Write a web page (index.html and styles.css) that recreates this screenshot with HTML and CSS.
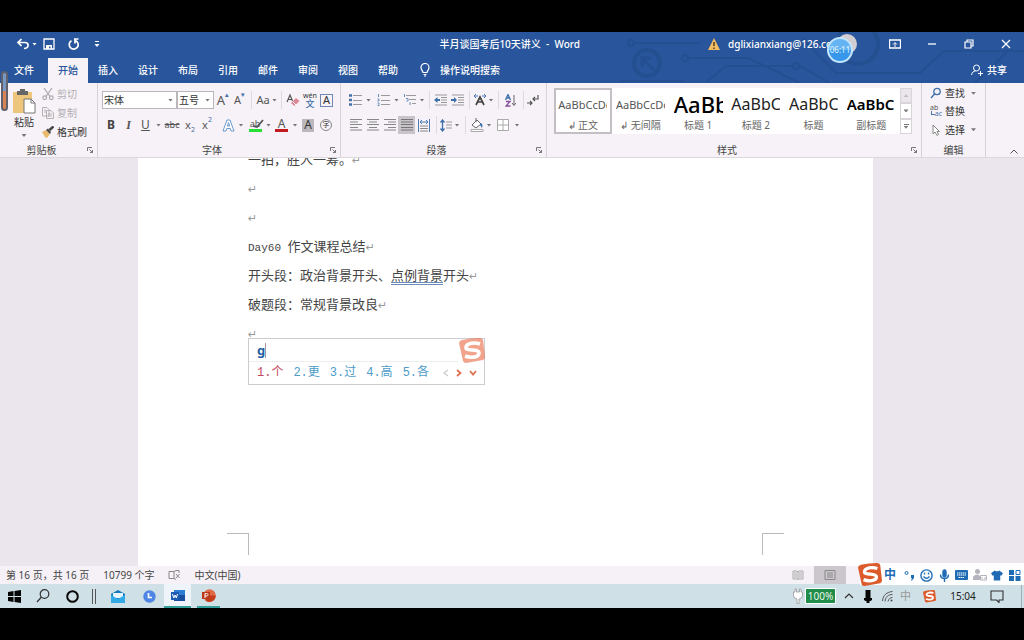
FILE: index.html
```html
<!DOCTYPE html>
<html lang="zh-CN">
<head>
<meta charset="utf-8">
<meta name="viewport" content="width=device-width, initial-scale=1">
<title>半月谈国考后10天讲义 - Word</title>
<link rel="stylesheet" href="styles.css">
</head>
<body>
<main class="app">
  <header class="header">
    <svg class="circuit" width="410" height="51" viewBox="614 32 410 51" fill="none" stroke="#244f91" stroke-width="2" aria-hidden="true">
      <circle cx="631" cy="43" r="3"/><path d="M634 43H700M620 81H685M688 58H748L800 83M706 82L726 66H792M800 66L830 83M802 38L836 73H920L944 51H1024M975 83L1008 51"/>
      <circle cx="685" cy="58" r="3"/><circle cx="796" cy="66" r="3"/>
      <circle cx="647" cy="63" r="13" stroke-width="4"/><path d="M654 70L643 59M642 67V58H651" stroke-width="3"/>
      <circle cx="858" cy="44" r="20" stroke-width="4"/>
    </svg>
    <div class="titlebar">
      <div class="quick">
        <button class="qbtn" aria-label="撤消"><svg width="14" height="14" viewBox="0 0 14 14" fill="none" stroke="#fff" stroke-width="1.7"><path d="M5.500 2L2 5.500L5.500 9M2 5.500H9C13.500 5.500 13 11.500 8 11.500"/></svg></button>
        <i class="arrow light"></i>
        <button class="qbtn" aria-label="保存"><svg width="12" height="12" viewBox="0 0 12 12"><path d="M1 1H11V11H1Z" fill="none" stroke="#fff" stroke-width="1.300"/><path d="M3 7H9V11H7.500V8.500H6V11H3Z" fill="#fff"/></svg></button>
        <button class="qbtn" aria-label="重复"><svg width="13" height="13" viewBox="0 0 13 13" fill="none" stroke="#fff" stroke-width="1.700"><path d="M4.500 2.700A4.500 4.500 0 1 0 8.500 2.500M7 1H11.500M8 1V5.500"/></svg></button>
        <button class="qbtn" aria-label="自定义快速访问工具栏"><svg width="6" height="7" viewBox="0 0 6 7"><path d="M1 .5H5" stroke="#fff"/><path d="M.5 3H5.500L3 6Z" fill="#fff"/></svg></button>
      </div>
      <h1 class="title">半月谈国考后10天讲义&nbsp; - &nbsp;Word</h1>
      <div class="account">
        <svg width="12" height="12" viewBox="0 0 12 12"><path d="M6 0L12 12H0Z" fill="#f5bd62"/><path d="M6 4V8M6 9.500V11" stroke="#463620" stroke-width="1.400"/></svg>
        <span class="mail">dglixianxiang@126.com</span>
        <span class="avatar">D</span>
        <span class="timer">06:11</span>
      </div>
      <div class="winbtns">
        <button aria-label="功能区显示选项"><svg width="12" height="10" viewBox="0 0 12 10" fill="none" stroke="#fff"><path d="M.5 1H11.500V9H.5Z" stroke-width="1.400"/><path d="M6 8V4M4 5.500L6 3.500L8 5.500"/></svg></button>
        <button aria-label="最小化"><svg width="10" height="10" viewBox="0 0 10 10"><path d="M1 5H9" stroke="#fff" stroke-width="1.300"/></svg></button>
        <button aria-label="还原"><svg width="10" height="10" viewBox="0 0 10 10" fill="none" stroke="#fff" stroke-width="1.200"><path d="M1 3H7V9H1ZM3 3V1H9V7H7"/></svg></button>
        <button aria-label="关闭"><svg width="10" height="10" viewBox="0 0 10 10"><path d="M1 1L9 9M9 1L1 9" stroke="#fff" stroke-width="1.200"/></svg></button>
      </div>
    </div>
    <nav class="tabs">
      <button class="tab file">文件</button><button class="tab active">开始</button><button class="tab">插入</button><button class="tab">设计</button><button class="tab">布局</button><button class="tab">引用</button><button class="tab">邮件</button><button class="tab">审阅</button><button class="tab">视图</button><button class="tab">帮助</button>
      <button class="tell"><svg width="10" height="14" viewBox="0 0 10 14" fill="none" stroke="#fff" stroke-width="1.200"><path d="M3 9.500C3 8 1 7 1 4.500A4 4 0 0 1 9 4.500C9 7 7 8 7 9.500ZM3.500 11.500H6.500M4 13H6"/></svg>操作说明搜索</button>
      <button class="share"><svg width="12" height="12" viewBox="0 0 12 12" fill="none" stroke="#fff"><circle cx="5.500" cy="4" r="3"/><path d="M.5 11C1 8.500 2.500 7 4.500 7M7 9.500H12M9.500 7V12"/></svg>共享</button>
    </nav>
  </header>

  <section class="ribbon" aria-label="功能区">
    <div class="group clipboard">
      <div class="body">
        <button class="paste">
          <svg width="24" height="25" viewBox="0 0 24 25"><path d="M1 3H20V24H1Z" fill="#edc57b"/><path d="M5 2H8V0H13V2H16V6H5Z" fill="#666"/><path d="M12 10H19L23 14V24H12Z" fill="#fff" stroke="#777"/><path d="M19 10V14H23" fill="none" stroke="#777"/></svg>
          <span>粘贴</span><i class="arrow"></i>
        </button>
        <div class="stack">
          <button disabled><svg width="12" height="12" viewBox="0 0 12 12" fill="none" stroke="#aaa" stroke-width="1.200"><path d="M2 0L8 8.500M10 0L4 8.500"/><circle cx="2.700" cy="9.700" r="1.800"/><circle cx="9.300" cy="9.700" r="1.800"/></svg>剪切</button>
          <button disabled><svg width="12" height="12" viewBox="0 0 12 12" fill="#f7f3f7" stroke="#b2b0b3"><path d="M.5.5H5L7 2.500V9H.5ZM4.500 3.500H9L11.500 6V11.500H4.500ZM6 7H10M6 9H10M2 3H4M2 5H4"/></svg>复制</button>
          <button><svg width="12" height="12" viewBox="0 0 12 12"><path d="M0 6L4 4L8 8L5 12L3 11Z" fill="#e9b96e"/><path d="M4 4L6 2.500L9 6L8 8Z" fill="#444"/><path d="M7.500 4L11.500.5" stroke="#444" stroke-width="2.500"/></svg>格式刷</button>
        </div>
      </div>
      <div class="caption"><span>剪贴板</span><button class="launch" aria-label="剪贴板选项"><svg width="6" height="6" viewBox="0 0 6 6" fill="none" stroke="#777"><path d="M.5 4V.5H5M2.500 2.500L5.500 5.500M5.500 3V5.500H3"/></svg></button></div>
    </div>

    <div class="group font">
      <div class="body rows">
        <div class="row font-a">
          <label class="combo"><select aria-label="字体"><option>宋体</option></select><i class="arrow"></i></label>
          <label class="combo"><select aria-label="字号"><option>五号</option></select><i class="arrow"></i></label>
          <button class="glyph grow" aria-label="增大字号">A<sup>▴</sup></button>
          <button class="glyph shrink" aria-label="减小字号">A<sup>▾</sup></button>
          <i class="sep"></i>
          <button class="glyph">Aa</button><i class="arrow"></i><i class="sep"></i>
          <button aria-label="清除所有格式"><svg width="14" height="14" viewBox="0 0 14 14"><path d="M1 9L4 2L6.500 8M2 6.500H5.500" fill="none" stroke="#555" stroke-width="1.200"/><path d="M5 10L10 5L13.500 8L8.500 13Z" fill="#df8797"/><path d="M6.500 8.500L10 12" stroke="#fff"/></svg></button>
          <button class="pinyin"><small>wén</small><b>文</b></button>
          <button class="glyph boxed">A</button>
        </div>
        <div class="row font-b">
          <button class="glyph"><b>B</b></button><button class="glyph ital">I</button><button class="glyph under">U</button><i class="arrow"></i>
          <button class="glyph strike">abc</button><button class="glyph script">x<sub>2</sub></button><button class="glyph script">x<sup>2</sup></button><span></span>
          <button aria-label="文本效果"><svg width="13" height="13" viewBox="0 0 13 13" fill="#fff" stroke="#6a99cd"><path d="M1 12L5 1H8L12 12H9L8.300 9.500H4.700L4 12ZM5.300 7H7.700L6.500 3.500Z"/></svg></button><i class="arrow"></i>
          <button class="ink green" aria-label="文本突出显示颜色"><span>ab</span><svg width="14" height="10" viewBox="0 0 14 10"><path d="M3 7L7 8L13 1" fill="none" stroke="#555" stroke-width="1.800"/></svg></button><i class="arrow"></i>
          <button class="ink red" aria-label="字体颜色">A</button><i class="arrow"></i>
          <button class="glyph shaded">A</button><button class="circled">字</button>
        </div>
      </div>
      <div class="caption"><span>字体</span><button class="launch" aria-label="字体选项"><svg width="6" height="6" viewBox="0 0 6 6" fill="none" stroke="#777"><path d="M.5 4V.5H5M2.500 2.500L5.500 5.500M5.500 3V5.500H3"/></svg></button></div>
    </div>

    <div class="group para">
      <div class="body rows">
        <div class="row para-a">
          <button aria-label="项目符号"><svg width="13" height="12" viewBox="0 0 13 12"><path d="M4 1.500H13M4 6.500H13M4 10.500H13" stroke="#999"/><path d="M0 1.500H3M0 6H3M0 10.500H3" stroke="#4472a8" stroke-width="2.400"/></svg></button><i class="arrow"></i>
          <button aria-label="编号"><svg width="13" height="12" viewBox="0 0 13 12"><path d="M4 1.500H13M4 6.500H13M4 10.500H13" stroke="#999"/><path d="M1.500 0V3M.5 5H2V7H.5M.5 9H2V11.500H.5" fill="none" stroke="#6a91be"/></svg></button><i class="arrow"></i>
          <button aria-label="多级列表"><svg width="13" height="12" viewBox="0 0 13 12"><path d="M3 1.500H13M6 5.500H13M9 9.500H13" stroke="#999"/><path d="M1.500 0V3M3 4.500H5V7H3.500M7 8V11" fill="none" stroke="#6a91be"/></svg></button><i class="arrow"></i><i class="sep"></i>
          <button aria-label="减少缩进量"><svg width="13" height="12" viewBox="0 0 13 12"><path d="M1 1H13M7 3.500H13M7 6H13M7 8.500H13M1 11H13" stroke="#999"/><path d="M0 6L3.500 3V5H6V7H3.500V9Z" fill="#3f6fa8"/></svg></button>
          <button aria-label="增加缩进量"><svg width="13" height="12" viewBox="0 0 13 12"><path d="M1 1H13M7 3.500H13M7 6H13M7 8.500H13M1 11H13" stroke="#999"/><path d="M6 6L3 3V5H0V7H3V9Z" fill="#3f6fa8"/></svg></button><i class="sep"></i>
          <button aria-label="中文版式"><svg width="14" height="12" viewBox="0 0 14 12" fill="none"><path d="M3 11L7 3L11 11M4.500 8H9.500" stroke="#444" stroke-width="1.700"/><path d="M1 2H5M1 2L3 0M1 2L3 4M13 2H9M13 2L11 0M13 2L11 4" stroke="#4b7db4"/></svg></button><i class="arrow"></i><i class="sep"></i>
          <button aria-label="排序"><svg width="11" height="13" viewBox="0 0 11 13" fill="none"><path d="M.5 6L3 .5L5.500 6M1.500 4H4.500" stroke="#3f6fa8" stroke-width="1.300"/><path d="M1 7.500H5L1 12H5.500" stroke="#86519b" stroke-width="1.300"/><path d="M9 1V11M7 9L9 11.500L11 9" stroke="#666"/></svg></button><i class="sep"></i>
          <button aria-label="显示编辑标记"><svg width="12" height="12" viewBox="0 0 12 12" fill="none" stroke="#555" stroke-width="1.200"><path d="M11 1V5H6M8 3L6 5L8 7M0 9H5M3 7L5 9L3 11"/></svg></button>
        </div>
        <div class="row para-b">
          <button aria-label="左对齐"><svg width="12" height="12" viewBox="0 0 12 12" stroke="#888"><path d="M0 .5H12M0 3H8M0 5.500H12M0 8.500H8M0 11H12"/></svg></button>
          <button aria-label="居中"><svg width="12" height="12" viewBox="0 0 12 12" stroke="#888"><path d="M0 .5H12M2 3H10M0 5.500H12M2 8.500H10M0 11H12"/></svg></button>
          <button aria-label="右对齐"><svg width="12" height="12" viewBox="0 0 12 12" stroke="#888"><path d="M0 .5H12M4 3H12M0 5.500H12M4 8.500H12M0 11H12"/></svg></button>
          <button class="pressed" aria-label="两端对齐"><svg width="12" height="12" viewBox="0 0 12 12" stroke="#777"><path d="M0 .5H12M0 3H12M0 5.500H12M0 8.500H12M0 11H12"/></svg></button>
          <button aria-label="分散对齐"><svg width="12" height="13" viewBox="0 0 12 13" fill="none"><path d="M.5 0V13M11.500 0V13M2 3H10M4 1L2 3L4 5M8 1L10 3L8 5" stroke="#4b7db4"/><path d="M2 7H10M2 9.500H10M2 12H10" stroke="#888"/></svg></button><i class="sep"></i>
          <button aria-label="行距"><svg width="12" height="13" viewBox="0 0 12 13" fill="none"><path d="M2.500 1V12M.5 3.500L2.500 1L4.500 3.500M.5 9.500L2.500 12L4.500 9.500" stroke="#3f6fa8" stroke-width="1.300"/><path d="M6 3H12M6 6H12M6 9H12" stroke="#999"/></svg></button><i class="arrow"></i><i class="sep"></i>
          <button aria-label="底纹"><svg width="14" height="14" viewBox="0 0 14 14"><path d="M2 7L7 2L11 6L6 10Z" fill="#fff" stroke="#666"/><path d="M6 4V0" stroke="#666"/><path d="M10 5C13 5 12.500 8 12 10L10 7Z" fill="#3f6fa8"/><path d="M1 11.500H13V13.500H1Z" fill="#fff" stroke="#aaa"/></svg></button><i class="arrow"></i>
          <button aria-label="边框"><svg width="12" height="12" viewBox="0 0 12 12" fill="#fff" stroke="#aaa"><path d="M.5.5H11.500V11.500H.5ZM6 .5V11.500M.5 6H11.500"/></svg></button><i class="arrow"></i>
        </div>
      </div>
      <div class="caption"><span>段落</span><button class="launch" aria-label="段落选项"><svg width="6" height="6" viewBox="0 0 6 6" fill="none" stroke="#777"><path d="M.5 4V.5H5M2.500 2.500L5.500 5.500M5.500 3V5.500H3"/></svg></button></div>
    </div>

    <div class="group styles">
      <div class="body">
        <div class="gallery">
          <button class="style on"><span class="prev small">AaBbCcDd</span><span>↲ 正文</span></button>
          <button class="style"><span class="prev small">AaBbCcDd</span><span>↲ 无间隔</span></button>
          <button class="style"><span class="prev huge">AaBb</span><span>标题 1</span></button>
          <button class="style"><span class="prev">AaBbC</span><span>标题 2</span></button>
          <button class="style"><span class="prev">AaBbC</span><span>标题</span></button>
          <button class="style"><span class="prev strong">AaBbC</span><span>副标题</span></button>
        </div>
        <div class="spin">
          <button class="off" aria-label="上一行"><i class="arrow up"></i></button><button aria-label="下一行"><i class="arrow"></i></button><button class="more" aria-label="其他"><i class="arrow"></i></button>
        </div>
      </div>
      <div class="caption"><span>样式</span><button class="launch" aria-label="样式选项"><svg width="6" height="6" viewBox="0 0 6 6" fill="none" stroke="#777"><path d="M.5 4V.5H5M2.500 2.500L5.500 5.500M5.500 3V5.500H3"/></svg></button></div>
    </div>

    <div class="group editing">
      <div class="body">
        <div class="stack">
          <button><svg width="12" height="12" viewBox="0 0 12 12" fill="none" stroke="#3f6fa8" stroke-width="1.300"><circle cx="7" cy="4.500" r="3.200"/><path d="M4.500 7L1 11"/></svg>查找<i class="arrow"></i></button>
          <button><span class="swap"><span>ab</span><span>ac</span></span>替换</button>
          <button><svg width="12" height="12" viewBox="0 0 12 12" fill="#fff" stroke="#888"><path d="M3 1V10L5 8L7 11.500L8.500 10.500L7 7.500H9.500Z"/></svg>选择<i class="arrow"></i></button>
        </div>
      </div>
      <div class="caption"><span>编辑</span></div>
    </div>
    <button class="collapse" aria-label="折叠功能区"><svg width="8" height="5" viewBox="0 0 8 5" fill="none" stroke="#555"><path d="M.5 4.500L4 1L7.500 4.500"/></svg></button>
    <span class="gauge"></span>
  </section>

  <section class="desk">
    <article class="page">
      <div class="text">
        <p>一拍，胜人一筹。<span class="ret">↵</span></p>
        <p><span class="ret">↵</span></p>
        <p><span class="ret">↵</span></p>
        <p><span class="latin">Day60 </span>作文课程总结<span class="ret">↵</span></p>
        <p>开头段：政治背景开头、<u>点例背景</u>开头<span class="ret">↵</span></p>
        <p>破题段：常规背景改良<span class="ret">↵</span></p>
        <p><span class="ret">↵</span></p>
        <div class="ime">
          <div class="typed"><input aria-label="拼音输入" value="g"><span class="caret"></span></div>
          <div class="cands">
            <button class="first">1.个</button><button>2.更</button><button>3.过</button><button>4.高</button><button>5.各</button>
            <span class="pager">
              <button aria-label="上一页"><svg width="6" height="8" viewBox="0 0 6 8" fill="none" stroke="#ccc" stroke-width="1.200"><path d="M5 1L1 4L5 7"/></svg></button>
              <button aria-label="下一页"><svg width="6" height="8" viewBox="0 0 6 8" fill="none" stroke="#e0714f" stroke-width="1.800"><path d="M1 1L4.500 4L1 7"/></svg></button>
              <button aria-label="更多"><svg width="8" height="6" viewBox="0 0 8 6" fill="none" stroke="#e0714f" stroke-width="1.800"><path d="M1 1L4 4.500L7 1"/></svg></button>
            </span>
          </div>
          <svg class="sogou" width="26" height="26" viewBox="0 0 26 26" opacity=".6"><path d="M3 2Q12 0 21 0Q23 0 24 2L26 19Q26 21 24 22L7 25Q5 25 4 23L0 5Q0 3 3 2Z" fill="#e8693f"/><path d="M21 6C15 4 8 5 7 9C6 14 20 10 20 15C20 20 11 20 6 18" fill="none" stroke="#fff" stroke-width="3.600"/></svg>
        </div>
      </div>
      <div class="crops"><i class="crop left"></i><i class="crop right"></i></div>
    </article>
  </section>

  <footer class="status">
    <span>第 16 页，共 16 页</span><span>10799 个字</span>
    <svg width="12" height="10" viewBox="0 0 12 10" fill="none" stroke="#888"><path d="M6 1.500H1V8.500H6V1M6 1.500L8 .5H11V3M6 8.500L8 9.500M8 4L11.500 8M11.500 4L8 8"/></svg>
    <span>中文(中国)</span>
    <div class="views">
      <button aria-label="阅读视图"><svg width="12" height="10" viewBox="0 0 12 10" fill="none" stroke="#aaa"><path d="M6 1V9.500M1 1H5L6 2L7 1H11V9H1ZM2 3H5M2 5H5M2 7H5M7 3H10M7 5H10M7 7H10"/></svg></button>
      <button class="on" aria-label="页面视图"><svg width="12" height="10" viewBox="0 0 12 10" fill="none" stroke="#888"><path d="M1 .5H11V9.500H1ZM3 3H9M3 5H9M3 7H9"/></svg></button>
    </div>
    <div class="imebar">
      <button aria-label="搜狗输入法"><svg width="24" height="24" viewBox="0 0 26 26"><path d="M3 2Q12 0 21 0Q23 0 24 2L26 19Q26 21 24 22L7 25Q5 25 4 23L0 5Q0 3 3 2Z" fill="#dc5a2b"/><path d="M21 6C15 4 8 5 7 9C6 14 20 10 20 15C20 20 11 20 6 18" fill="none" stroke="#fff" stroke-width="3.600"/></svg></button>
      <button class="zh">中</button>
      <button aria-label="标点"><svg width="11" height="12" viewBox="0 0 11 12"><circle cx="2.500" cy="4" r="1.500" fill="none" stroke="#1f6cb5"/><path d="M7 6H10V9L8 11.500H7L8 9H7Z" fill="#1f6cb5"/></svg></button>
      <button aria-label="表情"><svg width="13" height="13" viewBox="0 0 13 13" fill="none" stroke="#1f6cb5" stroke-width="1.400"><circle cx="6.500" cy="6.500" r="5.600"/><path d="M3.500 7.500Q6.500 11 9.500 7.500M4.500 3.500V5.500M8.500 3.500V5.500"/></svg></button>
      <button aria-label="语音"><svg width="11" height="13" viewBox="0 0 11 13" fill="none" stroke="#1f6cb5" stroke-width="1.400"><rect x="4" y="1" width="3" height="7" rx="1.500" fill="#1f6cb5"/><path d="M1.500 5.500C1.500 11 9.500 11 9.500 5.500M5.500 10V13"/></svg></button>
      <button aria-label="软键盘"><svg width="13" height="10" viewBox="0 0 13 10"><rect width="13" height="10" rx="1" fill="#1f6cb5"/><path d="M2 3H11M2 5H11M3.500 7.500H9.500" stroke="#fff" stroke-dasharray="1.500 .5"/></svg></button>
      <button aria-label="登录"><svg width="14" height="12" viewBox="0 0 14 12" fill="#b4b5bd"><circle cx="4.500" cy="2.500" r="2.500"/><path d="M0 11V8Q1 5.500 5 5.500L7 7V11Z"/><path d="M7.500 6.500H13.500V11H7.500ZM9 8V10M12 8V10" fill="#fff" stroke="#b4b5bd"/></svg></button>
      <button aria-label="皮肤"><svg width="12" height="11" viewBox="0 0 13 11"><path d="M4 0Q6.500 2 9 0L13 3L11 6L10 5V11H3V5L2 6L0 3Z" fill="#1f6cb5"/></svg></button>
      <button aria-label="工具箱"><svg width="12" height="11" viewBox="0 0 12 11" fill="#1f6cb5"><path d="M0 0H5V5H0ZM0 6H5V11H0ZM6.500 6H11.500V11H6.500Z"/><path d="M7 .5H11V4.500H7Z" fill="none" stroke="#1f6cb5"/></svg></button>
    </div>
  </footer>

  <nav class="taskbar">
    <div class="pins">
      <button aria-label="开始菜单"><svg width="13" height="13" viewBox="0 0 13 13"><path d="M0 2L5.500 1V6H0ZM6.500 1L13 0V6H6.500ZM0 7H5.500V12L0 11ZM6.500 7H13V13L6.500 12Z" fill="#050505"/></svg></button>
      <button aria-label="搜索"><svg width="14" height="14" viewBox="0 0 14 14" fill="none" stroke="#333" stroke-width="1.200"><circle cx="8.500" cy="5" r="4.300"/><path d="M5.500 8L1 13"/></svg></button>
      <button aria-label="Cortana"><svg width="13" height="13" viewBox="0 0 13 13"><circle cx="6.500" cy="6.500" r="5.300" fill="none" stroke="#080808" stroke-width="2"/></svg></button>
      <span class="bars"></span>
      <button aria-label="邮件"><svg width="14" height="13" viewBox="0 0 14 13"><path d="M0 4L7 0L14 4V13H0Z" fill="#1578bd"/><path d="M2 3H12V8H2Z" fill="#e8f6fc"/><path d="M0 5L7 9L14 5V13H0Z" fill="#33a9e6"/></svg></button>
      <button aria-label="时钟"><svg width="13" height="13" viewBox="0 0 13 13"><circle cx="6.500" cy="6.500" r="6.200" fill="#4f86e5"/><path d="M5.500 3V7.500H9" fill="none" stroke="#fff" stroke-width="1.700"/></svg></button>
      <button class="current" aria-label="Word"><svg width="14" height="13" viewBox="0 0 14 13"><path d="M3 1H14V12H3Z" fill="#2f7cd4"/><path d="M3 6H14V12H3Z" fill="#184c9c"/><path d="M0 3H8V11H0Z" fill="#1c5cb5"/><path d="M1.500 5L2.700 9L4 6L5.300 9L6.500 5" fill="none" stroke="#fff"/></svg></button>
      <button class="open" aria-label="PowerPoint"><svg width="14" height="13" viewBox="0 0 14 13"><circle cx="7.500" cy="6.500" r="6.200" fill="#e0694a"/><path d="M7.500 6.500H13.700A6.200 6.200 0 0 1 3 11Z" fill="#c43e1c"/><path d="M0 3H8V10H0Z" fill="#bd3b1b"/><path d="M3 9V4.500H4.500C6.500 4.500 6.500 7 4.500 7H3" fill="none" stroke="#fff"/></svg></button>
    </div>
    <div class="tray">
      <svg width="10" height="16" viewBox="0 0 10 16" fill="#fff" stroke="#999" stroke-width=".8"><path d="M2 4V1H3.500V4H6.500V1H8V4H9.500V8Q9 10.500 6 11V15.500H4V11Q1 10.500.5 8V4Z"/></svg>
      <span class="battery">100%</span>
      <button aria-label="显示隐藏的图标"><svg width="10" height="6" viewBox="0 0 10 6" fill="none" stroke="#333" stroke-width="1.200"><path d="M1 5L5 1L9 5"/></svg></button>
      <button aria-label="麦克风"><svg width="8" height="13" viewBox="0 0 8 13"><path d="M1.500 0H6.500V8H8V10L6.500 11H5.500V13H2.500V11H1.500L0 10V8H1.500Z" fill="#080808"/></svg></button>
      <button aria-label="网络"><svg width="11" height="11" viewBox="0 0 11 11" fill="none" stroke="#555"><path d="M.5 10C1 4 5 1 10.500.5M3 10.500C3.500 6 6 3.500 10.500 3.500M6 10.500C6.500 8 8 6.500 10.500 6.500"/><circle cx="9.500" cy="9.500" r="1" fill="#444" stroke="none"/></svg></button>
      <button class="off">中</button>
      <button aria-label="搜狗"><svg width="13" height="13" viewBox="0 0 26 26"><path d="M3 2Q12 0 21 0Q23 0 24 2L26 19Q26 21 24 22L7 25Q5 25 4 23L0 5Q0 3 3 2Z" fill="#dc5a2b"/><path d="M21 6C15 4 8 5 7 9C6 14 20 10 20 15C20 20 11 20 6 18" fill="none" stroke="#fff" stroke-width="3.600"/></svg></button>
      <time>15:04</time>
      <button aria-label="通知"><svg width="14" height="13" viewBox="0 0 14 13" fill="none" stroke="#333" stroke-width="1.100"><path d="M1 1H13V10H9V12.500L6.500 10H1Z"/></svg></button>
      <span class="peek"></span>
    </div>
  </nav>
</main>
</body>
</html>
```
FILE: styles.css
```css
* { box-sizing: border-box; }
body {
  margin: 0;
  background: #000;
  color: #333;
  font: 10px/14px "Noto Sans", "Noto Sans CJK SC", sans-serif;
}
button {
  display: flex;
  align-items: center;
  justify-content: center;
  padding: 0;
  border: 0;
  background: none;
  color: inherit;
  font: inherit;
  white-space: nowrap;
}
svg { flex: none; display: block; }
.app {
  display: flex;
  flex-direction: column;
  min-height: 100vh;
  padding: 32px 0;
}
.arrow {
  flex: none;
  justify-self: center;
  width: 5px;
  height: 3px;
  background: #777;
  clip-path: polygon(0 0, 100% 0, 50% 100%);
}
.arrow.light { background: #fff; }
.arrow.up { background: #bbb; clip-path: polygon(50% 0, 100% 100%, 0 100%); }

/* Title bar and tabs */
.header { position: relative; background: #28559b; color: #fff; }
.circuit { position: absolute; right: 0; top: 0; }
.titlebar {
  position: relative;
  display: grid;
  grid-template-columns: 1fr auto 296px 148px;
  align-items: center;
  height: 26px;
  padding-bottom: 2px;
}
.quick { display: flex; align-items: center; padding-left: 14px; }
.qbtn { width: 24px; height: 24px; }
.qbtn:first-child { width: 18px; }
.title { margin: 0; font-size: 10px; font-weight: 500; line-height: 24px; }
.account { position: relative; display: flex; align-items: center; gap: 8px; padding-left: 128px; }
.mail { width: 112px; margin-right: -11px; font-size: 10px; font-weight: 500; white-space: nowrap; }
.avatar {
  position: relative;
  display: grid;
  place-items: center;
  flex: none;
  width: 20px;
  height: 20px;
  border-radius: 50%;
  background: #d2cdd1;
  color: #777;
}
.timer {
  position: absolute;
  right: 23px;
  top: 3px;
  display: grid;
  place-items: center;
  width: 26px;
  height: 26px;
  border: 2px solid #c3e5fb;
  border-radius: 50%;
  background: linear-gradient(#64b4f3 50%, #3797ea 50%);
  color: #e5f4ff;
  font-size: 8px;
}
.winbtns { display: grid; grid-template-columns: repeat(4, 37px); }
.winbtns button { height: 24px; }
.tabs { display: flex; height: 25px; }
.tabs button { position: relative; padding-bottom: 1px; font-weight: 500; }
.tab { width: 40px; }
.tab.file { width: 48px; }
.tab.active { background: #f6f2f7; color: #28559b; }
.tell { gap: 10px; margin-left: 12px; }
.share { gap: 4px; margin-left: auto; margin-right: 17px; }

/* Ribbon */
.ribbon {
  position: relative;
  display: flex;
  border-bottom: 1px solid #ddd7de;
  background: #f6f2f7;
}
.group {
  display: flex;
  flex-direction: column;
  border-right: 1px solid #d6d2d8;
}
.body { display: flex; height: 60px; padding-top: 5px; }
.rows { flex-direction: column; gap: 1px; }
.caption { display: flex; align-items: center; height: 14px; color: #444; }
.caption span { flex: 1; text-align: center; }
.launch { width: 14px; }
.clipboard { width: 98px; }
.font { width: 243px; }
.para { width: 206px; }
.styles { flex: 1; }
.editing { width: 64px; }
.paste { flex-direction: column; justify-content: flex-start; width: 42px; padding-left: 6px; }
.paste .arrow { margin-top: 4px; }
.paste span { line-height: 16px; }
.stack { display: flex; flex-direction: column; height: 57px; }
.stack button { flex: 1; justify-content: flex-start; gap: 3px; }
.stack button:disabled { color: #b2aeb4; }
.clipboard .body, .editing .body { padding-top: 1px; }
.clipboard .paste { padding-top: 5px; }
.stack .arrow { margin-left: 3px; }
.editing .stack { padding-left: 8px; }
.editing .stack { height: 55px; }
.swap { width: 12px; color: #555; font-size: 7px; line-height: 6px; text-align: left; }
.swap span { display: block; }
.swap span:last-child { display: flex; justify-content: flex-end; color: #4976ac; }
.swap span:last-child::before { content: ""; width: 3px; height: 3px; border: solid #4976ac; border-width: 0 0 1px 1px; }

.row { display: grid; align-items: center; height: 24px; }
.row > button { height: 18px; }
.font .row { padding-left: 4px; }
.para .row { padding-left: 6px; }
.font-a { grid-template-columns: 75px 37px 18px 15px 8px 16px 7px 6px 18px 16px 17px; }
.font-b { grid-template-columns: 18px 17px 17px 9px 18px 18px 16px 4px 18px 8px 20px 7px 19px 8px 18px 18px; }
.para-a { grid-template-columns: 17px 9px 20px 7px 18px 8px 6px 17px 17px 6px 15px 8px 6px 18px 8px 12px; }
.para-b { grid-template-columns: 17px 17px 17px 17px 18px 6px 14px 8px 8px 16px 8px 20px 8px; }
.sep { justify-self: center; width: 1px; height: 18px; background: #dedae0; }
.combo {
  display: flex;
  align-items: center;
  height: 18px;
  padding-right: 3px;
  border: 1px solid #bab6bc;
  background: #fff;
}
.combo select {
  flex: 1;
  min-width: 0;
  padding: 0 0 0 1px;
  border: 0;
  appearance: none;
  background: none;
  color: #333;
  font: inherit;
}
.glyph { color: #555; font-size: 12px; }
.glyph b { color: #444; }
.glyph sup, .glyph sub { color: #3f6fa8; font-size: 7px; line-height: 8px; }
.glyph sup { align-self: flex-start; }
.glyph sub { align-self: flex-end; }
.font-a > .glyph { font-size: 11px; }
.font-a > .grow { font-size: 13px; }
.pinyin { flex-direction: column; }
.pinyin small { font-size: 7px; line-height: 7px; }
.pinyin b { color: #3f6fa8; font-size: 9px; font-weight: 500; line-height: 9px; }
.row > .boxed { justify-self: center; width: 13px; height: 13px; border: 1px solid #7089b6; color: #333; }
.ital { font-family: "Liberation Serif", serif; font-style: italic; font-weight: 700; }
.under { text-decoration: underline; }
.strike { font-size: 9px; text-decoration: line-through; }
.script { font-size: 11px; }
.row > .ink { position: relative; justify-self: center; width: 13px; height: 14px; border-bottom: 3px solid #c11a20; color: #555; font-size: 12px; line-height: 11px; }
.row > .green { border-color: #28df36; font-size: 9px; }
.green svg { position: absolute; left: 1px; top: 1px; }
.row > .shaded { justify-self: center; width: 12px; height: 13px; background: #bbb7bc; color: #333; }
.row > .circled { justify-self: center; width: 12px; height: 12px; border: 1px solid #888; border-radius: 50%; font-size: 7px; }
.row > .pressed { background: #c8c4c9; }

.styles .body { padding: 5px 9px 9px 7px; }
.gallery { display: grid; grid-template-columns: repeat(6, 1fr); flex: 1; min-width: 0; background: #fff; }
.style {
  flex-direction: column;
  min-width: 0;
  overflow: hidden;
  border: 2px solid transparent;
  color: #666;
}
.style.on { border-color: #c3bfc4; }
.prev {
  width: 49px;
  height: 27px;
  overflow: hidden;
  color: #222;
  font-size: 16px;
  line-height: 27px;
  text-align: left;
}
.small { color: #555; font-size: 11px; }
.huge { color: #000; font-size: 22px; font-weight: 500; }
.strong { color: #000; font-size: 15px; font-weight: 600; }
.spin { display: flex; flex-direction: column; width: 12px; }
.spin button { flex: 1; border: 1px solid #d8d4d9; background: #fff; }
.spin .off { background: #ebe6ec; }
.spin .more { flex-direction: column; gap: 1px; }
.more::before { content: ""; width: 5px; height: 1px; background: #777; }
.collapse { align-self: flex-end; width: 38px; height: 12px; padding-left: 18px; }
.gauge {
  position: absolute;
  left: 1px;
  top: -12px;
  width: 7px;
  height: 40px;
  border: 2px solid #60616c;
  border-radius: 4px;
  background: linear-gradient(#7899c4 50%, #d98553 50%);
}

/* Document */
.desk {
  display: flex;
  flex: 1;
  justify-content: center;
  overflow: hidden;
  padding-right: 13px;
  background: #ebe5ed;
}
.page {
  display: flex;
  flex-direction: column;
  width: 735px;
  background: #fff;
}
.text {
  position: relative;
  margin-top: -14px;
  padding: 0 110px;
  color: #444;
  font: 13px/29px "Noto Sans CJK SC", sans-serif;
}
.text p { height: 29px; margin: 0; }
.latin { font-family: "Liberation Mono", monospace; font-size: 11px; white-space: pre; }
.ret { color: #999; font-family: "DejaVu Sans", sans-serif; font-size: 11px; }
.text u { text-decoration: underline double #6c8cba 1px; text-underline-offset: 2px; }
.crops { display: flex; justify-content: space-between; margin-top: auto; padding: 0 89px 11px; }
.crop { width: 22px; height: 22px; border-top: 1px solid #bbb; }
.left { border-right: 1px solid #bbb; }
.right { border-left: 1px solid #bbb; }

/* Candidate window */
.ime {
  position: absolute;
  left: 110px;
  top: 194px;
  width: 237px;
  border: 1px solid #cfc9d0;
  background: #fff;
  line-height: 20px;
}
.typed { display: flex; align-items: center; height: 23px; margin-right: 26px; padding-left: 8px; border-bottom: 1px solid #ededed; }
.typed input { width: 8px; padding: 0; border: 0; outline: 0; color: #1f5fa5; font: 700 13px/20px "Noto Sans", sans-serif; }
.caret { width: 1px; height: 15px; background: #a99; }
.cands { display: flex; align-items: center; gap: 10px; height: 22px; padding-left: 8px; color: #4b9bc8; font: 12px/20px "Liberation Mono", "Noto Sans CJK SC", monospace; }
.first { color: #c5485b; }
.pager { display: flex; gap: 7px; padding-left: 4px; }
.sogou { position: absolute; right: -1px; top: -1px; }

/* Status bar */
.status { position: relative; display: flex; align-items: center; gap: 14px; height: 18px; padding-left: 6px; background: #f6f1f6; color: #444; }
.views { display: flex; align-self: stretch; margin-left: auto; padding-right: 178px; }
.views button { width: 32px; }
.views .on { background: #cbc7cc; }
.imebar {
  position: absolute;
  right: 0;
  bottom: -1px;
  display: grid;
  grid-template-columns: 20px 20px 18px 17px 18px 17px 19px 16px 19px;
  height: 22px;
  padding-bottom: 2px;
  background: #fff;
}
.zh { color: #1f6cb5; font-size: 12px; font-weight: 700; }

/* Taskbar */
.taskbar { display: flex; justify-content: space-between; height: 24px; background: #cfe0e6; }
.pins { display: grid; grid-template-columns: 28px 30px 28px 16px 32px 30px 27px 35px; }
.bars { justify-self: center; align-self: center; width: 4px; height: 15px; border: solid #555; border-width: 0 1px; }
.current { border-bottom: 2px solid #35a09b; background: #eef4fa; }
.open { justify-self: center; width: 23px; border-bottom: 2px solid #35a09b; }
.tray { display: grid; grid-template-columns: 12px 34px 20px 18px 20px 17px 30px 38px 30px 12px; align-items: center; }
.battery { width: 31px; border: 1px solid #fff; background: #218b48; color: #e8f6ec; line-height: 14px; text-align: center; }
.tray .off { color: #999; font-size: 11px; }
.tray time { color: #222; text-align: center; font-size: 10px; }
.peek { justify-self: end; width: 3px; height: 24px; border-left: 1px solid #9eb0b8; }
```
